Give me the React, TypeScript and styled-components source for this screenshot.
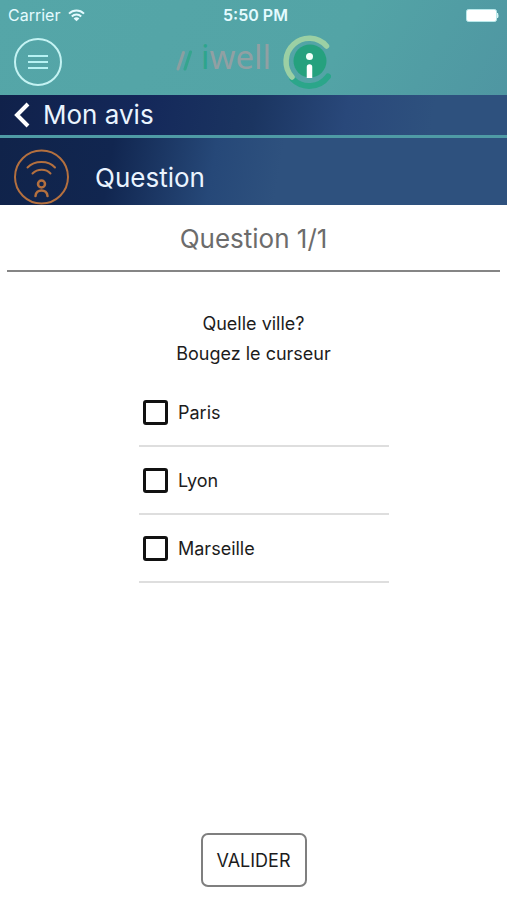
import React from "react";
import styled, { createGlobalStyle } from "styled-components";

const GlobalStyle = createGlobalStyle`
  * { box-sizing: border-box; }
  body {
    margin: 0;
    background: #fff;
    color: #1c1c1c;
    font-family: Inter, "Liberation Sans", sans-serif;
  }
  button, input { font: inherit; color: inherit; }
`;

const Screen = styled.div`
  display: flex;
  flex-direction: column;
  min-height: 100vh;
`;

const Header = styled.header`
  height: 95px;
  background: linear-gradient(120deg, #55a6a8 0%, #53a4a6 65%, #4f96a2 100%);
`;

const StatusBar = styled.div`
  display: grid;
  grid-template-columns: 1fr auto 1fr;
  align-items: center;
  height: 30px;
  padding: 0 8px;
  color: #e4fbff;
  font-size: 16px;
  line-height: 20px;
`;

const Carrier = styled.span`
  display: flex;
  align-items: center;
  gap: 8px;
`;

const Clock = styled.time`
  font-size: 16px;
  font-weight: 600;
  padding-left: 4px;
`;

const BatteryIcon = styled.svg`
  justify-self: end;
`;

const Toolbar = styled.div`
  display: grid;
  grid-template-columns: 1fr auto 1fr;
  align-items: center;
  height: 64px;
  padding: 0 14px;
`;

const MenuButton = styled.button`
  width: 48px;
  height: 48px;
  padding: 0;
  border: 2px solid #c4f3f3;
  border-radius: 50%;
  background: none;
  display: grid;
  place-items: center;
  cursor: pointer;
`;

const Brand = styled.div`
  display: flex;
  align-items: center;
  height: 56px;
`;

const Wordmark = styled.span`
  padding: 0 10px 10px 9px;
  color: #91a0a3;
  font-family: "Noto Sans", "Open Sans", sans-serif;
  font-size: 33px;
  line-height: 44px;
`;

const WordmarkInitial = styled.span`
  color: #2ea58c;
`;

const Bar = styled.div<{ $tall?: boolean }>`
  display: flex;
  align-items: center;
  height: ${(p) => (p.$tall ? "67px" : "43px")};
  padding: 0 14px;
  color: #eaf4ff;
  font-size: 26px;
  line-height: 32px;
  border-bottom: ${(p) => (p.$tall ? "none" : "3px solid #4f9ba5")};
  background: ${(p) =>
    p.$tall
      ? "linear-gradient(100deg, #10234a 0%, #112650 22%, #264878 42%, #2e517e 55%, #2e517e 100%)"
      : "linear-gradient(100deg, #10214a 0%, #14285a 28%, #1b3561 50%, #29487a 68%, #2e517e 85%, #2e517e 100%)"};
`;

const BackButton = styled.button`
  display: flex;
  align-items: center;
  gap: 13px;
  padding: 0;
  border: 0;
  background: none;
  cursor: pointer;
`;

const SectionTitle = styled.h1`
  margin: 0;
  padding: 12px 0 0 26px;
  font-size: inherit;
  font-weight: 400;
`;

const BadgeIcon = styled.svg`
  align-self: flex-end;
  flex: none;
`;

const Form = styled.form`
  flex: 1;
  display: flex;
  flex-direction: column;
  align-items: center;
  padding: 0 7px 13px;
`;

const Progress = styled.h2`
  align-self: stretch;
  margin: 0;
  height: 67px;
  border-bottom: 2px solid #858585;
  color: #6c6c6c;
  font-size: 26px;
  font-weight: 400;
  line-height: 67px;
  text-align: center;
`;

const Choices = styled.fieldset`
  width: 250px;
  min-width: 0;
  margin: 37px 0 0 21px;
  padding: 0;
  border: 0;
`;

const Prompt = styled.legend`
  width: 100%;
  margin-bottom: 10px;
  padding: 0 21px 0 0;
  font-size: 18px;
  line-height: 30px;
  text-align: center;
`;

const Choice = styled.label`
  display: flex;
  align-items: center;
  gap: 10px;
  height: 68px;
  padding-left: 4px;
  border-bottom: 2px solid #dedede;
  font-size: 18px;
  cursor: pointer;
`;

const Checkbox = styled.input`
  appearance: none;
  flex: none;
  width: 25px;
  height: 25px;
  margin: 0;
  border: 3px solid #111;
  border-radius: 3px;
  background: #fff;
  &:checked { box-shadow: inset 0 0 0 3px #fff; background: #111; }
`;

const SubmitButton = styled.button`
  margin-top: auto;
  width: 106px;
  height: 54px;
  padding: 0;
  border: 2px solid #7f7f7f;
  border-radius: 7px;
  background: #fff;
  font-size: 18px;
  cursor: pointer;
`;

const cities = ["Paris", "Lyon", "Marseille"];

export default function App() {
  return (
    <Screen>
      <GlobalStyle />
      <Header>
        <StatusBar>
          <Carrier>
            Carrier
            <svg width="17" height="13" viewBox="0 0 17 13" fill="none" stroke="#e4fbff" strokeWidth="2" aria-hidden="true">
              <path d="M1 4.6C5.2.4 11.8.4 16 4.6M3.8 7.5c2.6-2.6 6.8-2.6 9.4 0" />
              <path d="M5.6 9.4c1.6-1.5 4.2-1.5 5.8 0L8.5 12.3Z" fill="#e4fbff" stroke="none" />
            </svg>
          </Carrier>
          <Clock>5:50 PM</Clock>
          <BatteryIcon width="34" height="13" viewBox="0 0 34 13" role="img" aria-label="Battery full">
            <rect x="1.5" y=".5" width="30" height="12" rx="2" fill="#fff" stroke="#b9e8ea" />
            <path d="M32 4h1q1 2.500 0 5h-1Z" fill="#d5f5f5" />
          </BatteryIcon>
        </StatusBar>
        <Toolbar>
          <MenuButton type="button" aria-label="Menu">
            <svg width="20" height="16" viewBox="0 0 20 16" stroke="#b6f2f3" strokeWidth="2" aria-hidden="true">
              <path d="M0 2h20M0 8h20M0 14h20" />
            </svg>
          </MenuButton>
          <Brand>
            <svg width="16" height="24" viewBox="0 0 16 24" fill="none" strokeWidth="3" strokeLinecap="round" aria-hidden="true">
              <path d="M2 19L7.500 2.500" stroke="#8b9fa1" />
              <path d="M9 19L14.500 2" stroke="#35a58e" />
            </svg>
            <Wordmark>
              <WordmarkInitial>i</WordmarkInitial>well
            </Wordmark>
            <svg width="50" height="56" viewBox="0 0 50 56" fill="none" aria-hidden="true">
              <circle cx="29" cy="27" r="16.5" fill="#25a17e" />
              <path d="M11.500 45A23.500 23.500 0 0 0 47 42.500" stroke="#2ba68a" strokeWidth="6" strokeLinecap="round" />
              <path d="M45.500 12A23 23 0 1 0 11 43" stroke="#9bd0a4" strokeWidth="5.5" strokeLinecap="round" />
              <circle cx="28.5" cy="22.5" r="3.5" fill="#f2fff9" />
              <path d="M25.750 44V33a2.750 2.750 0 0 1 5.500 0V44Z" fill="#fff" />
            </svg>
          </Brand>
        </Toolbar>
      </Header>
      <Bar as="nav">
        <BackButton type="button">
          <svg width="16" height="26" viewBox="0 0 16 26" fill="none" stroke="#fff" strokeWidth="4" aria-hidden="true">
            <path d="M14 2L3 13L14 24" />
          </svg>
          Mon avis
        </BackButton>
      </Bar>
      <Bar $tall>
        <BadgeIcon width="55" height="56" viewBox="0 0 55 56" fill="none" stroke="#b4703f" strokeWidth="2" strokeLinecap="round" aria-hidden="true">
          <circle cx="27.500" cy="28" r="26.500" />
          <path d="M13.500 18.500C20.500 11 34.500 11 41 18.500M18.500 24.500C23.500 19.500 32 19.500 36.500 24.500" />
          <circle cx="27.500" cy="35" r="3.500" strokeWidth="2.500" />
          <path d="M21.500 47C22 39.500 33 39.500 33.500 47" strokeWidth="2.500" />
        </BadgeIcon>
        <SectionTitle>Question</SectionTitle>
      </Bar>
      <Form onSubmit={(e) => e.preventDefault()}>
        <Progress>Question 1/1</Progress>
        <Choices>
          <Prompt>
            Quelle ville?
            <br />
            Bougez le curseur
          </Prompt>
          {cities.map((city) => (
            <Choice key={city}>
              <Checkbox type="checkbox" name="city" value={city} />
              {city}
            </Choice>
          ))}
        </Choices>
        <SubmitButton type="submit">VALIDER</SubmitButton>
      </Form>
    </Screen>
  );
}
